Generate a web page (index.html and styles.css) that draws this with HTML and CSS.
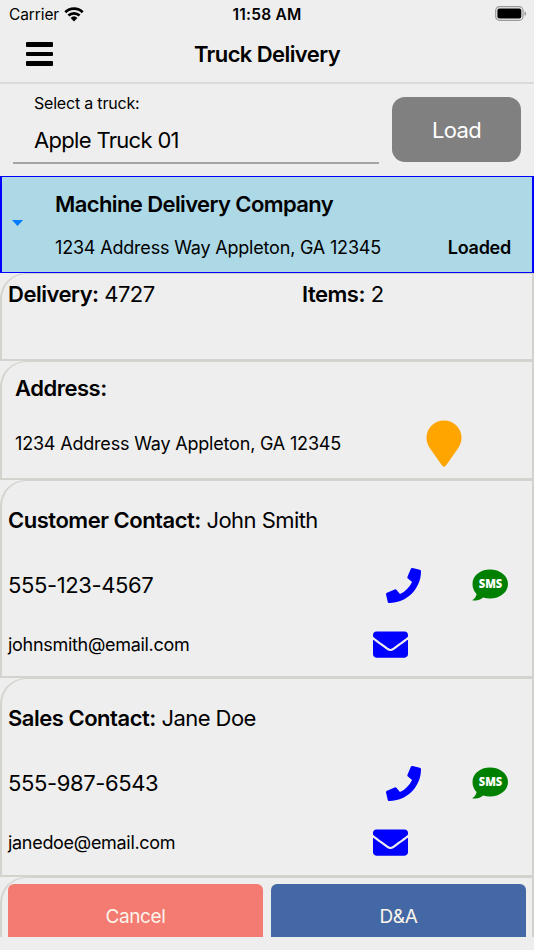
FILE: index.html
```html
<!DOCTYPE html>
<html lang="en">
<head>
    <meta charset="utf-8">
    <title>Truck Delivery</title>
    <link rel="stylesheet" href="styles.css">
</head>
<body>
    <svg class="sprite" width="0" height="0">
        <symbol id="phone" viewBox="0 0 512 512">
            <path d="M493.4 24.6l-104-24c-11.3-2.6-22.9 3.3-27.5 13.9l-48 112c-4.2 9.8-1.4 21.3 6.9 28l60.6 49.6c-36 76.7-98.9 140.5-177.2 177.2l-49.6-60.6c-6.8-8.3-18.2-11.1-28-6.9l-112 48C3.9 366.5-2 378.1.6 389.4l24 104C27.1 504.2 36.7 512 48 512c256.1 0 464-207.5 464-464 0-11.2-7.7-20.9-18.6-23.4z"/>
        </symbol>
        <symbol id="mail" viewBox="0 0 512 384">
            <path d="M502.3 126.8c3.9-3.1 9.7-.2 9.7 4.7V336c0 26.5-21.5 48-48 48H48c-26.5 0-48-21.5-48-48V131.6c0-5 5.7-7.8 9.7-4.7 22.4 17.4 52.1 39.5 154.1 113.6 21.1 15.4 56.7 47.8 92.2 47.6 35.7.3 72-32.8 92.3-47.6 102-74.1 131.6-96.3 154-113.7zM256 256c23.2.4 56.6-29.2 73.4-41.4 132.7-96.3 142.8-104.7 173.4-128.7 5.8-4.5 9.2-11.5 9.2-18.9V48c0-26.5-21.5-48-48-48H48C21.5 0 0 21.5 0 48v19c0 7.4 3.4 14.3 9.2 18.9 30.6 23.9 40.7 32.4 173.4 128.7 16.8 12.2 50.2 41.8 73.4 41.4z"/>
        </symbol>
        <symbol id="bubble" viewBox="0 0 36 32">
            <path d="M18 .5C8 .5.5 6.8.5 15c0 4.300 1.600 7.400 4.100 9.900C4.200 27.500 2.900 29.200.8 30.800c-.6.5-.4.8.3.8 4 0 7.400-.8 10-3.100 2.200.7 4.500 1 6.900 1C28 29.500 36 23.200 36 15S28 .5 18 .5z"/>
        </symbol>
    </svg>

    <div class="status-bar">
        <div class="carrier">
            <span class="carrier-name">Carrier</span>
            <svg class="wifi" viewBox="0 0 20 15">
                <path d="M1.3 5.200a12.500 12.500 0 0 1 17.400 0M4.400 8.500a8.200 8.200 0 0 1 11.200 0" fill="none" stroke="#000" stroke-width="2.700"/>
                <path d="M6.600 10.900a5 5 0 0 1 6.800 0L10 14.400z"/>
            </svg>
        </div>
        <div class="clock">11:58 AM</div>
        <svg class="battery" viewBox="0 0 32 16">
            <rect x="0.7" y="0.7" width="27.3" height="13.6" rx="3.8" fill="none" stroke="#999" stroke-width="1.2"/>
            <rect x="2.4" y="2.4" width="23.9" height="10.2" rx="2"/>
            <path d="M29.5 5.200c2.200.9 2.200 3.700 0 4.600z" fill="#999"/>
        </svg>
    </div>

    <div class="header">
        <div class="menu">
            <span></span>
            <span></span>
            <span></span>
        </div>
        <div class="title">Truck Delivery</div>
    </div>

    <div class="truck-row">
        <div class="truck-select">
            <div class="truck-label">Select a truck:</div>
            <div class="truck-value">Apple Truck 01</div>
        </div>
        <div class="load-button">Load</div>
    </div>

    <div class="stop">
        <div class="arrow"></div>
        <div class="stop-info">
            <div class="stop-name">Machine Delivery Company</div>
            <div class="stop-line">
                <span class="small-text">1234 Address Way Appleton, GA 12345</span>
                <span class="stop-status">Loaded</span>
            </div>
        </div>
    </div>

    <div class="card delivery">
        <div class="big-text delivery-no"><b>Delivery:</b> 4727</div>
        <div class="big-text"><b>Items:</b> 2</div>
    </div>

    <div class="card address">
        <div class="big-text"><b>Address:</b></div>
        <div class="address-line">
            <span class="small-text">1234 Address Way Appleton, GA 12345</span>
            <svg class="pin" viewBox="0 0 36 47">
                <path d="M18 .5C8.300.5.5 8.200.5 17.800c0 3.900 1.100 7 3.200 10.100l12.400 17.700c1 1.400 2.900 1.400 3.900 0l12.300-17.700c2.100-3.100 3.200-6.200 3.200-10.100C35.500 8.200 27.700.5 18 .5z"/>
            </svg>
        </div>
    </div>

    <div class="card contact customer">
        <div class="big-text contact-name"><b>Customer Contact:</b> John Smith</div>
        <div class="contact-line phone-line">
            <span class="phone-number">555-123-4567</span>
            <svg class="phone-icon"><use href="#phone"/></svg>
            <div class="sms">
                <svg class="sms-bubble"><use href="#bubble"/></svg>
                <span class="sms-text">SMS</span>
            </div>
        </div>
        <div class="contact-line mail-line">
            <span class="email">johnsmith@email.com</span>
            <svg class="mail-icon"><use href="#mail"/></svg>
        </div>
    </div>

    <div class="card contact">
        <div class="big-text contact-name"><b>Sales Contact:</b> Jane Doe</div>
        <div class="contact-line phone-line">
            <span class="phone-number">555-987-6543</span>
            <svg class="phone-icon"><use href="#phone"/></svg>
            <div class="sms">
                <svg class="sms-bubble"><use href="#bubble"/></svg>
                <span class="sms-text">SMS</span>
            </div>
        </div>
        <div class="contact-line mail-line">
            <span class="email">janedoe@email.com</span>
            <svg class="mail-icon"><use href="#mail"/></svg>
        </div>
    </div>

    <div class="card buttons">
        <div class="button cancel">Cancel</div>
        <div class="button accept">D&amp;A</div>
    </div>
</body>
</html>
```
FILE: styles.css
```css
* {
    box-sizing: border-box;
}
body {
    margin: 0;
    width: 534px;
    height: 950px;
    overflow: hidden;
    background-color: #eeeeee;
    color: #000;
    font-family: Inter, "Liberation Sans", sans-serif;
    white-space: nowrap;
}
b {
    font-weight: 600;
}
svg {
    display: block;
    flex: none;
}
.sprite {
    position: absolute;
}

/* status bar */
.status-bar {
    display: grid;
    grid-template-columns: 1fr auto 1fr;
    align-items: center;
    height: 28px;
    padding: 0 7px 0 9px;
    font-size: 15.5px;
}
.carrier {
    display: flex;
    align-items: center;
    gap: 5px;
}
.carrier-name {
    letter-spacing: -0.1px;
}
.wifi {
    width: 20px;
    height: 15px;
}
.clock {
    font-weight: 600;
    letter-spacing: 0.2px;
    margin-right: 2px;
}
.battery {
    width: 32px;
    height: 16px;
    justify-self: end;
}

/* header */
.header {
    display: grid;
    grid-template-columns: 1fr auto 1fr;
    align-items: center;
    height: 56px;
    padding: 0 26px 2px;
    border-bottom: 2px solid #dadada;
}
.menu {
    display: flex;
    flex-direction: column;
    gap: 5px;
    width: 27px;
}
.menu span {
    height: 4.7px;
    border-radius: 1px;
    background-color: #000;
}
.title {
    font-size: 22px;
    font-weight: 600;
    letter-spacing: -0.58px;
}

/* truck picker */
.truck-row {
    display: flex;
    height: 92px;
    padding: 0 13px;
    gap: 13px;
}
.truck-select {
    width: 366px;
    height: 80px;
    padding: 9px 21px 0;
    border-bottom: 2px solid #a4a4a4;
}
.truck-label {
    font-size: 16px;
    line-height: 20px;
    letter-spacing: -0.2px;
}
.truck-value {
    margin-top: 13px;
    font-size: 22px;
    line-height: 28px;
    letter-spacing: -0.68px;
}
.load-button {
    width: 129px;
    height: 65px;
    margin-top: 13px;
    border-radius: 13px;
    background-color: #808080;
    color: #fff;
    font-size: 22px;
    line-height: 66px;
    letter-spacing: -0.7px;
    text-align: center;
}

/* selected stop */
.stop {
    display: flex;
    align-items: center;
    height: 97px;
    padding: 0 21px 0 10px;
    border: 1px solid #0000ff;
    border-left-width: 2px;
    border-right-width: 2px;
    background-color: #add8e6;
}
.arrow {
    width: 11px;
    height: 6px;
    margin: -3px 32px 0 0;
    background-color: #007aff;
    clip-path: polygon(0 0, 100% 0, 50% 100%);
}
.stop-info {
    flex: 1;
}
.stop-name {
    font-size: 22px;
    font-weight: 600;
    line-height: 28px;
    letter-spacing: -0.6px;
}
.stop-line {
    display: flex;
    justify-content: space-between;
    margin-top: 18px;
    line-height: 24px;
}
.stop-status {
    font-size: 18px;
    font-weight: 600;
    letter-spacing: -0.25px;
}
.small-text, .email {
    font-size: 18px;
    letter-spacing: -0.19px;
}
.big-text {
    font-size: 22px;
    line-height: 28px;
    letter-spacing: -0.55px;
}
.big-text b {
    letter-spacing: -0.48px;
}

/* cards */
.card {
    border: 1px solid #d3d3ce;
    border-width: 1px 2px 2px 2px;
    border-top-left-radius: 26px;
}
.delivery {
    display: flex;
    height: 88px;
    padding: 6px;
}
.delivery-no {
    width: 294px;
}
.address {
    height: 119px;
    padding: 12px 13px;
}
.address-line {
    display: flex;
    align-items: center;
    height: 48px;
    margin-top: 17px;
}
.address-line .small-text {
    width: 411px;
}
.pin {
    width: 36px;
    height: 47px;
    fill: #ffa500;
}
.contact {
    height: 199px;
    padding: 25px 6px 0;
}
.customer {
    height: 198px;
}
.contact-line {
    display: flex;
    align-items: center;
}
.phone-line {
    height: 36px;
    margin-top: 33px;
}
.phone-number {
    width: 378px;
    font-size: 22px;
    letter-spacing: -0.38px;
}
.phone-icon {
    width: 35px;
    height: 35px;
    fill: #0000ff;
}
.sms {
    position: relative;
    margin-left: 51px;
}
.sms-bubble {
    width: 36px;
    height: 32px;
    fill: #008000;
}
.sms-text {
    position: absolute;
    top: 7px;
    left: 0;
    width: 37px;
    color: #fff;
    font-family: "Open Sans", sans-serif;
    font-size: 12px;
    font-weight: 800;
    line-height: 16px;
    text-align: center;
    transform: scaleX(0.92);
}
.mail-line {
    height: 28px;
    margin-top: 27px;
}
.email {
    width: 365px;
    letter-spacing: -0.3px;
}
.mail-icon {
    width: 35px;
    height: 27px;
    fill: #0000ff;
}

/* bottom buttons */
.buttons {
    display: flex;
    gap: 8px;
    height: 60px;
    padding: 6px 6px 0 6px;
    border-bottom: none;
}
.button {
    flex: 1;
    border-radius: 6px 6px 0 0;
    color: #faf5ea;
    font-size: 19px;
    line-height: 66px;
    letter-spacing: -0.35px;
    text-align: center;
}
.cancel {
    background-color: #f47b72;
}
.accept {
    background-color: #4468a5;
}
```
